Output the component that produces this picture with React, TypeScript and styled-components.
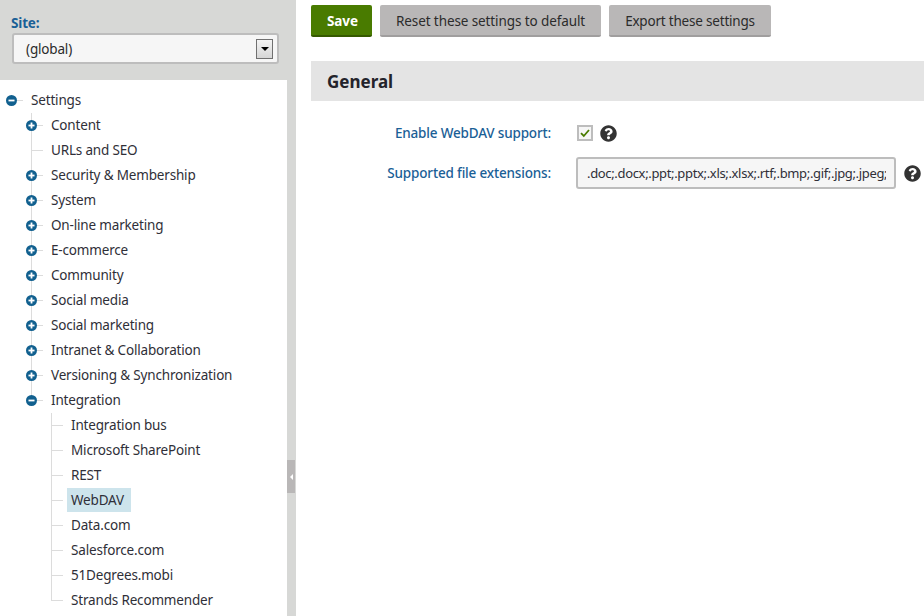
import React from "react";
import styled, { createGlobalStyle } from "styled-components";
import { FaQuestionCircle } from "react-icons/fa";

const Global = createGlobalStyle`
  html, body { margin: 0; padding: 0; height: 100%; overflow: hidden; background: #fff; }
  body { font-family: "Noto Sans", "Liberation Sans", sans-serif; font-size: 13.5px; letter-spacing: -0.17px; color: #2b2b2b; }
  * { box-sizing: border-box; }
`;

const Page = styled.div`
  display: flex;
  width: 924px;
  height: 616px;
  overflow: hidden;
`;
const Sidebar = styled.aside`
  width: 287px;
  flex: none;
  display: flex;
  flex-direction: column;
  background: #fff;
`;
const SitePanel = styled.div`
  height: 80px;
  flex: none;
  background: #d7d8d6;
  padding: 14px 8px 0 11px;
  margin-right: -1px;
`;
const SiteLabel = styled.label`
  display: block;
  height: 19px;
  line-height: 19px;
  font-weight: 700;
  color: #1a6096;
`;
const SiteSelect = styled.div`
  margin-left: 1px;
  width: 267px;
  height: 31px;
  border: 2px solid #bdbdbd;
  border-radius: 3px;
  background: #f6f6f6;
  display: flex;
  align-items: center;
  justify-content: space-between;
  padding: 0 4px 0 12px;
`;
const SelectButton = styled.span`
  width: 17px;
  height: 20px;
  border: 1px solid #707070;
  background: linear-gradient(#f4f4f4, #d6d6d6);
  display: flex;
  align-items: center;
  justify-content: center;
`;
const Arrow = styled.span`
  width: 0;
  height: 0;
  border-left: 4px solid transparent;
  border-right: 4px solid transparent;
  border-top: 4px solid #000;
`;
const TreeRoot = styled.ul`
  list-style: none;
  margin: 0;
  padding: 8px 0 0 11px;
`;
const SubTree = styled.ul`
  list-style: none;
  margin: 0;
  padding: 0 0 0 20px;
`;
const Item = styled.li<{ $last?: boolean; $root?: boolean }>`
  position: relative;
  &::before {
    content: ${(p) => (p.$root ? "none" : '""')};
    position: absolute;
    left: 0;
    top: 0;
    width: 1px;
    background: #dcdcdc;
    height: ${(p) => (p.$last ? "12.5px" : "100%")};
  }
`;
const Row = styled.div`
  height: 25px;
  display: flex;
  align-items: center;
  position: relative;
`;
const Stub = styled.span`
  width: 12px;
  height: 1px;
  background: #dcdcdc;
  flex: none;
  margin-right: 8px;
`;
const Toggle = styled.svg`
  position: absolute;
  left: -5px;
  top: 7px;
  width: 11px;
  height: 11px;
`;
const NodeLabel = styled.span<{ $selected?: boolean }>`
  align-self: flex-start;
  margin-left: -4px;
  padding: 0 ${(p) => (p.$selected ? "7px" : "4px")} 0 4px;
  height: 24px;
  line-height: 24px;
  background: ${(p) => (p.$selected ? "#cde4ec" : "transparent")};
  color: #2f2f38;
  white-space: nowrap;
`;
const Splitter = styled.div`
  width: 9px;
  flex: none;
  background: #d7d8d6;
  display: flex;
  flex-direction: column;
  padding-top: 460px;
  align-items: flex-end;
`;
const Handle = styled.div`
  width: 8px;
  margin-right: 1px;
  height: 33px;
  background: #b9b7b7;
  display: flex;
  align-items: center;
  justify-content: center;
`;
const HandleArrow = styled.span`
  width: 0;
  height: 0;
  border-top: 3px solid transparent;
  border-bottom: 3px solid transparent;
  border-right: 3px solid #fff;
`;
const Main = styled.main`
  flex: 1;
  min-width: 0;
  padding: 5px 0 0 15px;
`;
const Toolbar = styled.div`
  display: flex;
  gap: 8px;
  height: 32px;
`;
const Button = styled.button<{ $primary?: boolean }>`
  height: 32px;
  border: 0;
  border-bottom: 2px solid ${(p) => (p.$primary ? "#355900" : "#a09e9e")};
  border-radius: 2px;
  background: ${(p) => (p.$primary ? "#497b00" : "#b9b7b7")};
  color: ${(p) => (p.$primary ? "#fff" : "#2b2b2b")};
  font-family: inherit;
  font-size: inherit;
  letter-spacing: -0.1px;
  font-weight: ${(p) => (p.$primary ? 700 : 400)};
  padding: 1px 16px 0;
  width: ${(p) => (p.$primary ? "61px" : "auto")};
`;
const ExportButton = styled(Button)`
  letter-spacing: -0.2px;
`;
const Header = styled.h2`
  margin: 24px 0 0;
  height: 40px;
  background: #e4e4e4;
  padding-left: 16px;
  font-size: 17px;
  letter-spacing: 0;
  font-weight: 700;
  line-height: 42px;
  color: #23232b;
`;
const Form = styled.div`
  display: grid;
  grid-template-columns: 240px auto;
  row-gap: 8px;
  padding-top: 16px;
`;
const FieldLabel = styled.label`
  text-align: right;
  color: #1a6096;
  font-weight: 500;
  height: 32px;
  line-height: 32px;
  white-space: nowrap;
`;
const FieldValue = styled.div`
  display: flex;
  align-items: center;
  padding-left: 25px;
  height: 32px;
`;
const CheckBox = styled.span`
  width: 16px;
  height: 16px;
  margin-left: 1px;
  border: 2px solid #bdbdbd;
  background: #f6f6f6;
  display: flex;
  align-items: center;
  justify-content: center;
`;
const Help = styled(FaQuestionCircle)<{ $gap: number }>`
  width: 17px;
  height: 17px;
  color: #333;
  margin-left: ${(p) => p.$gap}px;
  flex: none;
`;
const TextInput = styled.input`
  width: 320px;
  height: 32px;
  border: 2px solid #bdbdbd;
  border-radius: 3px;
  background: #f6f6f6;
  padding: 0 8px 0 9px;
  font-family: inherit;
  font-size: 13px;
  letter-spacing: -0.34px;
  color: #2f2f38;
  outline: none;
`;

const Icon = ({ open }: { open?: boolean }) => (
  <Toggle viewBox="0 0 11 11">
    <circle cx="5.5" cy="5.5" r="5.5" fill="#11608f" />
    <rect x="2.5" y="4.6" width="6" height="1.8" fill="#fff" />
    {!open && <rect x="4.6" y="2.5" width="1.8" height="6" fill="#fff" />}
  </Toggle>
);

const level1 = [
  ["Content", true],
  ["URLs and SEO", false],
  ["Security & Membership", true],
  ["System", true],
  ["On-line marketing", true],
  ["E-commerce", true],
  ["Community", true],
  ["Social media", true],
  ["Social marketing", true],
  ["Intranet & Collaboration", true],
  ["Versioning & Synchronization", true],
] as const;
const level2 = [
  "Integration bus",
  "Microsoft SharePoint",
  "REST",
  "WebDAV",
  "Data.com",
  "Salesforce.com",
  "51Degrees.mobi",
  "Strands Recommender",
];

export default function App() {
  return (
    <Page>
      <Global />
      <Sidebar>
        <SitePanel>
          <SiteLabel>Site:</SiteLabel>
          <SiteSelect>
            <span>(global)</span>
            <SelectButton><Arrow /></SelectButton>
          </SiteSelect>
        </SitePanel>
        <TreeRoot>
          <Item $root>
            <Row><Stub /><Icon open /><NodeLabel>Settings</NodeLabel></Row>
            <SubTree>
              {level1.map(([name, plus]) => (
                <Item key={name}>
                  <Row><Stub />{plus && <Icon />}<NodeLabel>{name}</NodeLabel></Row>
                </Item>
              ))}
              <Item $last>
                <Row><Stub /><Icon open /><NodeLabel>Integration</NodeLabel></Row>
                <SubTree>
                  {level2.map((name, i) => (
                    <Item key={name} $last={i === level2.length - 1}>
                      <Row><Stub /><NodeLabel $selected={name === "WebDAV"}>{name}</NodeLabel></Row>
                    </Item>
                  ))}
                </SubTree>
              </Item>
            </SubTree>
          </Item>
        </TreeRoot>
      </Sidebar>
      <Splitter><Handle><HandleArrow /></Handle></Splitter>
      <Main>
        <Toolbar>
          <Button $primary>Save</Button>
          <Button>Reset these settings to default</Button>
          <ExportButton>Export these settings</ExportButton>
        </Toolbar>
        <Header>General</Header>
        <Form>
          <FieldLabel>Enable WebDAV support:</FieldLabel>
          <FieldValue>
            <CheckBox>
              <svg width="10" height="10" viewBox="0 0 10 10">
                <path d="M1 5.2 L3.8 8 L9 2" fill="none" stroke="#497b00" strokeWidth="1.8" />
              </svg>
            </CheckBox>
            <Help $gap={7} />
          </FieldValue>
          <FieldLabel>Supported file extensions:</FieldLabel>
          <FieldValue>
            <TextInput readOnly value=".doc;.docx;.ppt;.pptx;.xls;.xlsx;.rtf;.bmp;.gif;.jpg;.jpeg;.png;.tif;.tiff" />
            <Help $gap={8} />
          </FieldValue>
        </Form>
      </Main>
    </Page>
  );
}
